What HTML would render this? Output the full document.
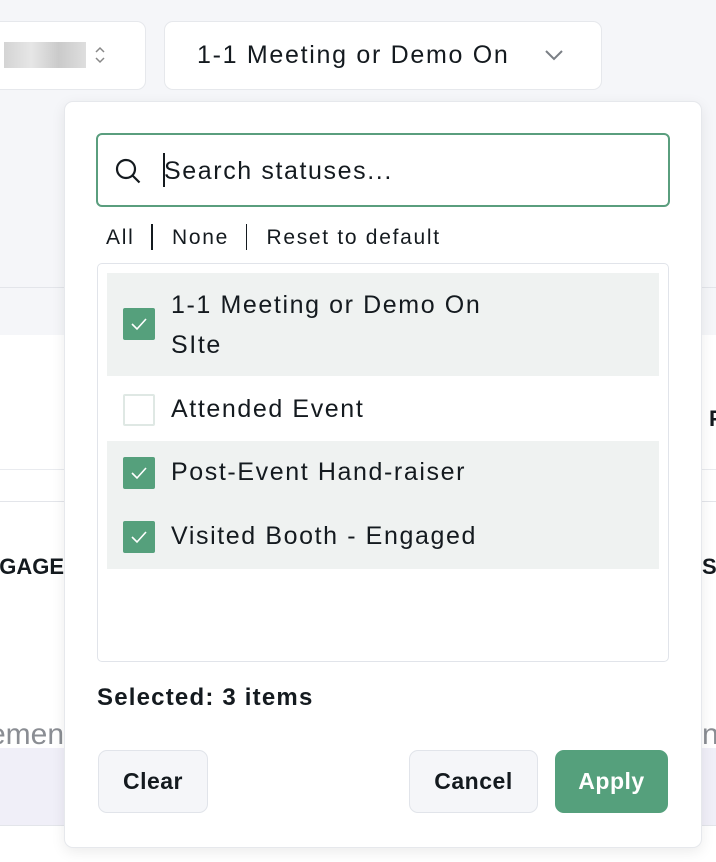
<!DOCTYPE html>
<html><head><style>
*{box-sizing:border-box;margin:0;padding:0}
html,body{overflow:hidden}
body{width:716px;height:862px;position:relative;overflow:hidden;background:#fff;font-family:"Liberation Sans",sans-serif;color:#141a1f;letter-spacing:1.6px}
.abs{position:absolute}
.chk{position:absolute;left:16px;width:32px;height:32px;border-radius:2px;background:#55a07c}
.chk svg{position:absolute;left:8px;top:9px}
.row{position:absolute;left:9px;width:552px;background:#eff2f1}
.lbl{position:absolute;left:64px;font-size:25px;line-height:40px;white-space:nowrap}
.btn{position:absolute;top:750px;height:63px;border:1.5px solid #e1e4ea;border-radius:9px;background:#f5f6f9;font-size:23px;font-weight:bold;display:flex;align-items:center;justify-content:center;letter-spacing:0.5px}
</style></head><body>
<div class="abs" style="left:0;top:0;width:716px;height:287px;background:#f5f6f9"></div>
<div class="abs" style="left:0;top:287px;width:716px;height:48px;background:#f5f6f9;border-top:1.5px solid #e3e5ea"></div>
<div class="abs" style="left:0;top:469px;width:716px;height:33px;border-top:1.5px solid #e9ebef;border-bottom:1.5px solid #e3e5ea"></div>
<div class="abs" style="left:0;top:554px;width:64px;overflow:hidden;height:30px"><div style="position:absolute;right:0;font-size:22px;font-weight:bold;letter-spacing:0">GAGE</div></div>
<div class="abs" style="left:702px;top:554px;width:14px;overflow:hidden;height:30px;font-size:22px;font-weight:bold;letter-spacing:0">SA</div>
<div class="abs" style="left:709px;top:406px;font-size:22px;font-weight:bold;letter-spacing:0">F</div>
<div class="abs" style="left:0;top:718px;width:64px;overflow:hidden;height:40px"><div style="position:absolute;right:0;font-size:30px;color:#8a8d93;letter-spacing:0">emen</div></div>
<div class="abs" style="left:702px;top:718px;width:14px;overflow:hidden;height:40px;font-size:30px;color:#8a8d93;letter-spacing:0">n</div>
<div class="abs" style="left:0;top:748px;width:716px;height:78px;background:#f0eff8;border-bottom:1.5px solid #e3e5ea"></div>
<div class="abs" style="left:-10px;top:21px;width:156px;height:69px;background:#fff;border:1.5px solid #e6e8ec;border-radius:9px"></div>
<div class="abs" style="left:4px;top:42px;width:82px;height:26px;background:linear-gradient(90deg,#c9c9c9,#e0e0e0,#bdbdbd,#d6d6d6);opacity:.8"></div>
<svg class="abs" style="left:94px;top:45px" width="12" height="20"><path d="M2 7l4-4 4 4M2 13l4 4 4-4" fill="none" stroke="#888" stroke-width="1.5"/></svg>
<div class="abs" style="left:164px;top:21px;width:438px;height:69px;background:#fff;border:1.5px solid #e6e8ec;border-radius:9px"></div>
<div class="abs" style="left:197px;top:40px;font-size:25px;line-height:30px;letter-spacing:1.7px;white-space:nowrap">1-1 Meeting or Demo On</div>
<svg class="abs" style="left:544px;top:48px" width="20" height="14"><path d="M2 3l8 8 8-8" fill="none" stroke="#7a7f85" stroke-width="2"/></svg>
<div class="abs" style="left:64px;top:101px;width:638px;height:747px;background:#fff;border:1.5px solid #e6e8ec;border-radius:9px;box-shadow:0 4px 14px rgba(0,0,0,.08)">
 <div class="abs" style="left:31px;top:31px;width:574px;height:74px;border:2px solid #5a9e7e;border-radius:6px">
  <svg class="abs" style="left:16px;top:22px" width="30" height="30"><circle cx="12" cy="12" r="9" fill="none" stroke="#141a1f" stroke-width="2.2"/><path d="M18.5 18.5l7 7" stroke="#141a1f" stroke-width="2.2"/></svg>
  <div class="abs" style="left:65px;top:18px;width:1.5px;height:34px;background:#141a1f"></div>
  <div class="abs" style="left:66px;top:20px;font-size:25px;line-height:32px;white-space:nowrap">Search statuses...</div>
 </div>
 <div class="abs" style="left:41px;top:122px;font-size:21px;line-height:28px;white-space:nowrap;letter-spacing:1.7px">All<span style="display:inline-block;width:1.5px;height:26px;background:#141a1f;margin:0 19px -6px 17px"></span>None<span style="display:inline-block;width:1.5px;height:26px;background:#141a1f;margin:0 19px -6px 17px"></span>Reset to default</div>
 <div class="abs" style="left:32px;top:161px;width:572px;height:399px;border:1.5px solid #e1e4ea;border-radius:5px">
  <div class="row" style="top:9px;height:103px"><div class="chk" style="top:35px"><svg width="16" height="14"><path d="M1 7l5 5 9-10" fill="none" stroke="#fff" stroke-width="1.6"/></svg></div><div class="lbl" style="top:12px">1-1 Meeting or Demo On<br>SIte</div></div>
  <div class="row" style="top:114px;height:63px;background:#fff"><div class="chk" style="top:16px;background:#fff;border:2px solid #dfe8e4"></div><div class="lbl" style="top:11px">Attended Event</div></div>
  <div class="row" style="top:177px;height:64px"><div class="chk" style="top:16px"><svg width="16" height="14"><path d="M1 7l5 5 9-10" fill="none" stroke="#fff" stroke-width="1.6"/></svg></div><div class="lbl" style="top:11px">Post-Event Hand-raiser</div></div>
  <div class="row" style="top:241px;height:64px"><div class="chk" style="top:16px"><svg width="16" height="14"><path d="M1 7l5 5 9-10" fill="none" stroke="#fff" stroke-width="1.6"/></svg></div><div class="lbl" style="top:11px">Visited Booth - Engaged</div></div>
 </div>
 <div class="abs" style="left:32px;top:580px;font-size:24px;font-weight:bold;line-height:32px;white-space:nowrap;letter-spacing:1.2px">Selected: 3 items</div>
</div>
<div class="btn" style="left:98px;width:110px">Clear</div>
<div class="btn" style="left:409px;width:129px">Cancel</div>
<div class="btn" style="left:555px;width:113px;background:#55a07c;border-color:#55a07c;color:#fff">Apply</div>
</body></html>
